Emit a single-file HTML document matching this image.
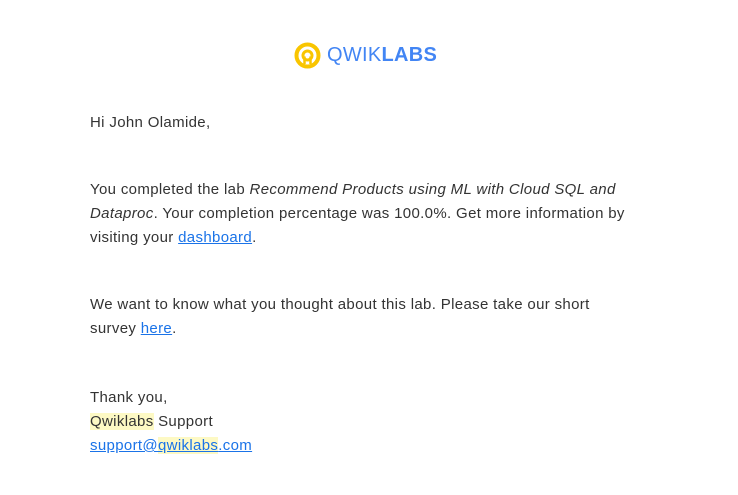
<!DOCTYPE html>
<html><head><meta charset="utf-8"><style>
body{margin:0;background:#fff;width:738px;height:495px;overflow:hidden;font-family:"Liberation Sans",Arial,sans-serif;color:#333;}
.logo{position:absolute;left:294px;top:41px;height:28px;display:flex;align-items:center}
.logo span{font-size:20px;color:#4285f4;letter-spacing:0.3px}
p{position:absolute;left:90px;margin:0;font-size:15px;letter-spacing:0.34px;line-height:24px;width:538px}
a{color:#1a73e8;text-decoration:underline}
.hl{background:#fdf9c4}
</style></head><body>
<div class="logo">
<svg width="27" height="27" viewBox="0 0 27 27"><circle cx="13.5" cy="13.5" r="11" fill="none" stroke="#f9c500" stroke-width="4"/><path d="M13.5 22 V14" stroke="#fff" stroke-width="3"/><circle cx="13.5" cy="13.5" r="4.5" fill="none" stroke="#f9c500" stroke-width="3"/><path d="M10.5 14.5 V22 M16.5 14.5 V22" stroke="#f9c500" stroke-width="2.5"/></svg>
<span style="margin-left:6px;font-weight:300">QWIK</span><span style="font-weight:bold">LABS</span>
</div>
<p style="top:111px">Hi John Olamide,</p>
<p style="top:178px">You completed the lab <i>Recommend Products using ML with Cloud SQL and Dataproc</i>. Your completion percentage was 100.0%. Get more information by visiting your <a>dashboard</a>.</p>
<p style="top:293px">We want to know what you thought about this lab. Please take our short survey <a>here</a>.</p>
<p style="top:386px">Thank you,<br><span class="hl">Qwiklabs</span> Support<br><a>support@<span class="hl">qwiklabs</span>.com</a></p>
</body></html>
